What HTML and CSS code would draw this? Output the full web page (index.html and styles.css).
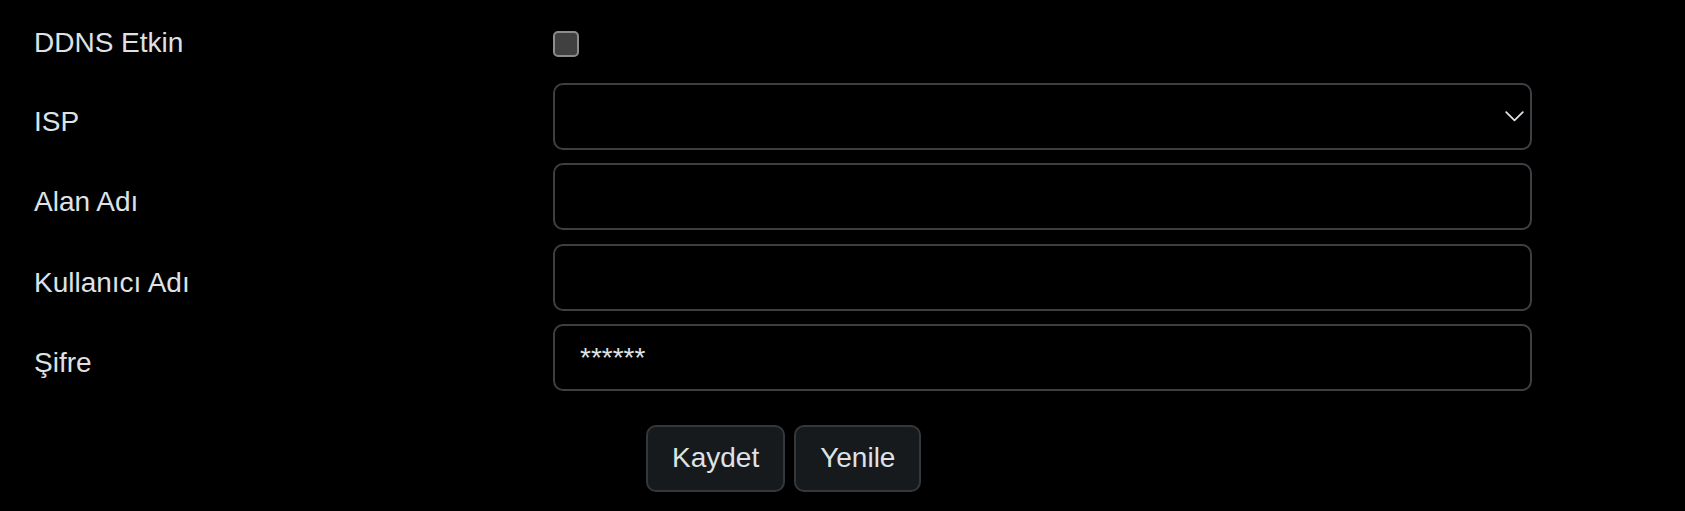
FILE: index.html
```html
<!DOCTYPE html>
<html lang="tr">
<head>
<meta charset="utf-8">
<title>DDNS</title>
<link rel="stylesheet" href="styles.css">
</head>
<body>
<form class="ddns-form">
  <div class="row row-check">
    <label class="row-label">DDNS Etkin</label>
    <div class="row-control">
      <span class="checkbox"></span>
    </div>
  </div>
  <div class="row">
    <label class="row-label">ISP</label>
    <div class="row-control">
      <div class="field select">
        <svg class="chevron" width="19" height="11" viewBox="0 0 19 11"><polyline points="1.2,1.2 9.5,9.3 17.8,1.2" fill="none" stroke="#dee2e6" stroke-width="1.8" stroke-linecap="round" stroke-linejoin="round"/></svg>
      </div>
    </div>
  </div>
  <div class="row">
    <label class="row-label">Alan Adı</label>
    <div class="row-control"><div class="field"></div></div>
  </div>
  <div class="row">
    <label class="row-label">Kullanıcı Adı</label>
    <div class="row-control"><div class="field"></div></div>
  </div>
  <div class="row">
    <label class="row-label">Şifre</label>
    <div class="row-control"><div class="field"><span class="value">******</span></div></div>
  </div>
  <div class="actions">
    <button type="button" class="btn">Kaydet</button>
    <button type="button" class="btn">Yenile</button>
  </div>
</form>
</body>
</html>
```

FILE: styles.css
```css
html, body {
  margin: 0;
  padding: 0;
  background: #000;
}

body {
  font-family: "Liberation Sans", Arial, sans-serif;
  font-size: 28px;
  color: #dee2e6;
}

.ddns-form {
  padding: 4px 0 0 34px;
  display: flex;
  flex-direction: column;
}

.row {
  display: flex;
  align-items: flex-start;
  height: 67px;
  margin-bottom: 13.4px;
}

.row-check {
  height: 66px;
  margin-bottom: 13px;
}

.row-label {
  flex: 0 0 519px;
  padding-top: 18px;
  line-height: 42px;
}

.row-control {
  flex: 0 0 979px;
}

.checkbox {
  display: block;
  width: 22px;
  height: 22px;
  margin-top: 27px;
  background: #404040;
  border: 2px solid #8c8c8c;
  border-radius: 5px;
}

.field {
  box-sizing: border-box;
  height: 67px;
  border: 2px solid #3b4045;
  border-radius: 10px;
  background: #000;
  display: flex;
  align-items: center;
  padding: 0 21px;
}

.select {
  justify-content: flex-end;
  padding-right: 6px;
}

.chevron {
  display: block;
  margin-top: -1px;
}

.value {
  line-height: 42px;
  padding-left: 4px;
}

.actions {
  display: flex;
  gap: 9px;
  margin-top: 20px;
  padding-left: 612px;
}

.btn {
  box-sizing: border-box;
  height: 67px;
  padding: 0 24px;
  font-family: "Liberation Sans", Arial, sans-serif;
  font-size: 28px;
  color: #dee2e6;
  background: #161a1d;
  border: 2px solid #33383d;
  border-radius: 10px;
}
```
